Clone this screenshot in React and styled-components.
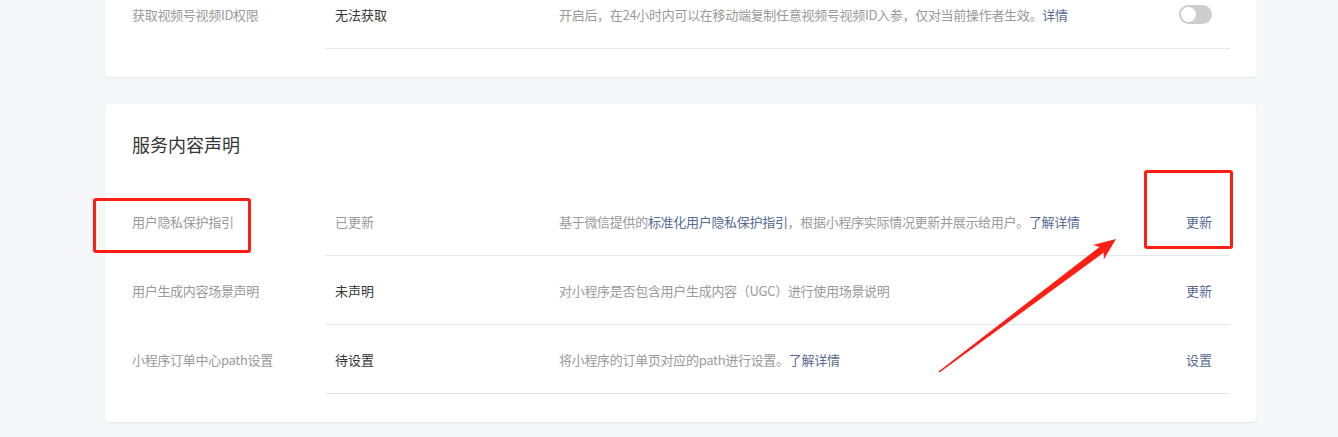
import React from 'react';
import styled, { createGlobalStyle } from 'styled-components';

const GlobalStyle = createGlobalStyle`
  html, body {
    margin: 0;
    padding: 0;
    background: #f6f7f9;
    font-family: "Noto Sans CJK SC", "Noto Sans", sans-serif;
    overflow: hidden;
  }
`

const Page = styled.div`
    position: relative;
    width: 1338px;
    height: 437px;
    overflow: hidden;
`

const Card = styled.div`
    margin-left: 105px;
    width: 1151px;
    background: #fff;
    border-radius: 4px;
    box-shadow: 0 1px 2px rgba(0, 0, 0, 0.07);
    padding: 0 26px 28px 27px;
    box-sizing: border-box;
    margin-top: ${props => props.offset || '0'};
`

const Title = styled.h3`
    margin: 0;
    height: 83px;
    box-sizing: border-box;
    padding-bottom: 3px;
    display: flex;
    align-items: center;
    font-size: 18px;
    font-weight: 400;
    color: #353535;
`

const Row = styled.div`
    display: flex;
    height: 69px;
    font-size: 13px;
`

const Label = styled.div`
    width: 193px;
    flex-shrink: 0;
    display: flex;
    align-items: center;
    color: #9a9a9a;
    letter-spacing: -0.3px;
`

const Body = styled.div`
    flex: 1;
    display: flex;
    align-items: center;
    border-bottom: 1px solid #e7e7e7;
`

const Status = styled.div`
    width: 224px;
    flex-shrink: 0;
    box-sizing: border-box;
    padding-left: 10px;
    color: ${props => props.muted ? '#9a9a9a' : '#353535'};
`

const Desc = styled.div`
    flex: 1;
    padding-left: 10px;
    white-space: nowrap;
    color: #9a9a9a;
    letter-spacing: -0.3px;
`

const Link = styled.a`
    color: #576b95;
    text-decoration: none;
    cursor: pointer;
`

const Action = styled.div`
    flex-shrink: 0;
    width: 80px;
    padding-right: 18px;
    display: flex;
    justify-content: flex-end;
    color: #576b95;
`

const Switch = styled.span`
    position: relative;
    display: inline-block;
    width: 33px;
    height: 19px;
    border-radius: 10px;
    background: #cdcdcd;

    &::after {
        content: '';
        position: absolute;
        left: 2px;
        top: 2px;
        width: 15px;
        height: 15px;
        border-radius: 50%;
        background: #fff;
    }
`

const Gap = styled.div`
    height: 27px;
`

const Mark = styled.div`
    position: absolute;
    left: ${props => props.x}px;
    top: ${props => props.y}px;
    width: ${props => props.w}px;
    height: ${props => props.h}px;
    border: 3px solid #ff1e14;
    border-radius: 3px;
    box-sizing: border-box;
    pointer-events: none;
`

const ArrowLayer = styled.svg`
    position: absolute;
    left: 0;
    top: 0;
    pointer-events: none;
`

const rows = [
    {
        label: '用户隐私保护指引',
        status: '已更新',
        muted: true,
        desc: <>基于微信提供的<Link>标准化用户隐私保护指引</Link>，根据小程序实际情况更新并展示给用户。<Link>了解详情</Link></>,
        action: '更新',
    },
    {
        label: '用户生成内容场景声明',
        status: '未声明',
        desc: <>对小程序是否包含用户生成内容（UGC）进行使用场景说明</>,
        action: '更新',
    },
    {
        label: '小程序订单中心path设置',
        status: '待设置',
        desc: <>将小程序的订单页对应的path进行设置。<Link>了解详情</Link></>,
        action: '设置',
    },
]

const App = () => {
    return (
        <>
            <GlobalStyle />
            <Page>
                <Card offset="-20px">
                    <Row>
                        <Label>获取视频号视频ID权限</Label>
                        <Body>
                            <Status>无法获取</Status>
                            <Desc>开启后，在24小时内可以在移动端复制任意视频号视频ID入参，仅对当前操作者生效。<Link>详情</Link></Desc>
                            <Action><Switch /></Action>
                        </Body>
                    </Row>
                </Card>
                <Gap />
                <Card>
                    <Title>服务内容声明</Title>
                    {rows.map(r => (
                        <Row key={r.label}>
                            <Label>{r.label}</Label>
                            <Body>
                                <Status muted={r.muted}>{r.status}</Status>
                                <Desc>{r.desc}</Desc>
                                <Action>{r.action}</Action>
                            </Body>
                        </Row>
                    ))}
                </Card>

                {/* red annotations drawn over the page */}
                <Mark x={93} y={198} w={158} h={55} />
                <Mark x={1144} y={170} w={89} h={79} />
                <ArrowLayer width="1338" height="437">
                    <polygon
                        fill="#ff1e14"
                        points="938.5,371.4 1099.5,247 1093,245 1116,239 1103.8,259.4 1103.7,252.6 939.5,372.5"
                    />
                </ArrowLayer>
            </Page>
        </>
    );
}

export default App;
